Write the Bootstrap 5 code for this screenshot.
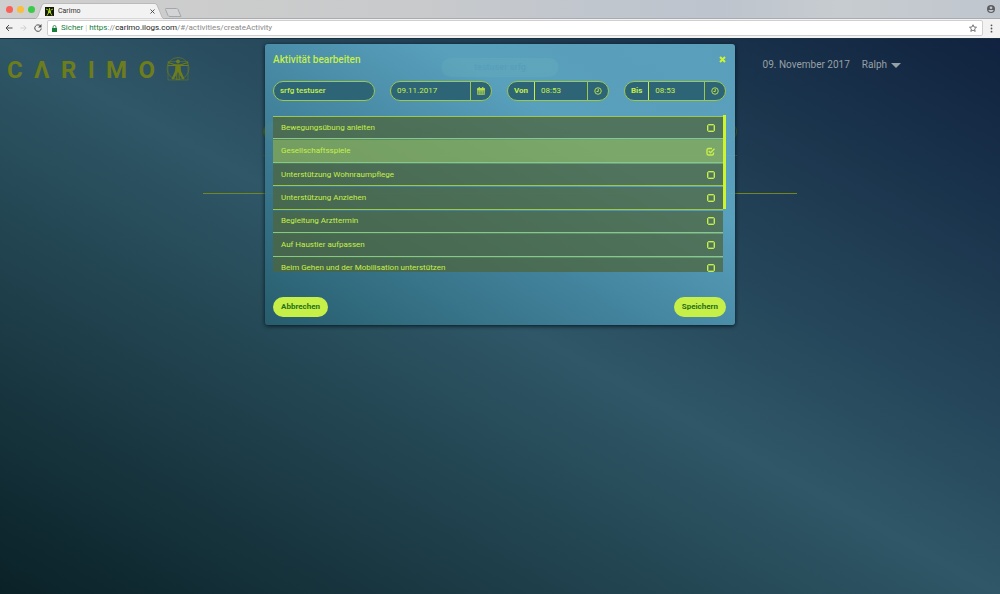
<!DOCTYPE html>
<html lang="de">
<head>
<meta charset="utf-8">
<meta name="viewport" content="width=device-width, initial-scale=1">
<title>Carimo</title>
<link href="https://cdn.jsdelivr.net/npm/bootstrap@5.3.0/dist/css/bootstrap.min.css" rel="stylesheet">
<style>
:root { --lime:#c6ef48; --line:#9cc84e; --field:#2d6577; --olive:#6d7d1c; }
body { font:8px/12px Roboto,"Liberation Sans",sans-serif; background:#0b2328; }
svg { display:block; flex:none; }
button, input { font:inherit; color:inherit; }

/* browser window */
.tabstrip { height:19px; background:linear-gradient(90deg,#cfcfcf,#c9cacb 40%,#c0c6ce 60%,#bdc4cd 72%,#c7ccd0 84%,#c0c6ce); border-bottom:1px solid #a9abae; padding:0 5px 0 6px; }
.lights { gap:4px; width:29px; margin-top:1px; }
.light { width:7px; height:7px; border-radius:50%; }
.tab { position:relative; width:130px; height:16px; padding:0 10px; font-size:7px; line-height:16px; color:#333; margin-bottom:-1px; }
.tab-shape { position:absolute; inset:0; width:100%; height:100%; }
.tab > :not(.tab-shape) { position:relative; }
.plain { border:0; background:none; padding:0; }
.toolbar { height:20px; background:#f2f2f2; border-bottom:1px solid #16303f; padding:1px 7px 2px 5px; color:#555; gap:7px; }
.address { height:16px; background:#fff; border:1px solid #cfcfcf; border-radius:2px; padding:0 5px 0 4px; margin-left:-2px; line-height:14px; color:#888; }
.divider { padding:0 2px; opacity:.5; }
.secure { color:#15803c; }
.host { color:#222; }

/* application */
.app { background:linear-gradient(to top right,#0a2127,#2f5767 50%,#10223f); }
.app-head { height:82px; padding:17px 99px 0 7px; color:#97a0a5; font-size:10px; line-height:18px; }
.wordmark { width:148px; height:28px; color:var(--olive); font-size:24px; line-height:28px; font-weight:700; }
.person { width:117px; height:19px; border-radius:10px; background:#7f9440; color:#0a2638; line-height:19px; font-size:9px; top:19px; }
.dim-nav { width:474px; height:72px; font-size:9px; }
.dim-nav a { height:21px; line-height:19px; width:112px; border:1px solid #4d641f; border-radius:11px; color:#0a2638; text-align:center; text-decoration:none; }
.dim-nav a:first-child { background:var(--olive); }
.dim-line { border-top:1px solid #4b6332; margin-top:13px; }
.rule { width:calc(60% - 6px); height:1px; background:#75861c; }

/* dialog */
.overlay { position:absolute; inset:0; padding-top:5px; }
.dialog { width:47%; min-width:470px; height:281px; padding:8px 9px 8px 8px; border-radius:3px; color:var(--lime); background:linear-gradient(to top right,rgba(39,94,110,.94),rgba(68,134,160,.94) 40%,rgba(92,166,195,.94) 68%,rgba(94,165,193,.94)); box-shadow:0 1px 4px #06161f; }
.dialog h1 { font-size:10px; line-height:15px; font-weight:500; }
.fields { display:grid; grid-template-columns:repeat(4,1fr); gap:15px; margin-top:14px; }
.field { height:20px; border:1px solid var(--line); border-radius:10px; background:var(--field); overflow:hidden; }
.field label { padding:0 6px; line-height:18px; font-weight:700; border-right:1px solid var(--lime); }
.field input { flex:1; min-width:0; width:0; border:0; padding:0 6px; background:none; outline:0; }
.field button { width:21px; border-left:1px solid var(--line); display:grid; place-items:center; }
.list-wrap { margin-top:14px; height:157px; }
.tasks { flex:1; overflow:hidden; margin-top:1px; }
.task-grid { display:grid; height:165px; grid-template-rows:repeat(7,1fr); border-top:1px solid var(--line); }
.task { display:flex; align-items:center; justify-content:space-between; padding:0 8px; margin-bottom:1px; background:rgba(78,102,61,.75); border-bottom:1px solid var(--line); }
.task:has(:checked) { background:rgba(135,170,80,.75); }
.task label { flex:1; }
.task input { appearance:none; width:8px; height:8px; margin:0; border:1px solid var(--lime); border-radius:2px; box-shadow:inset 0 0 0 1px rgba(198,239,72,.4); }
.task input:checked { border:0; box-shadow:none; width:9px; height:9px; background:url("data:image/svg+xml,%3Csvg xmlns='http://www.w3.org/2000/svg' viewBox='0 0 18 18' fill='none' stroke='%23c6ef48' stroke-width='2.8'%3E%3Cpath d='M12 3H5Q2 3 2 6v7q0 3 3 3h7q3 0 3-3v-2M5.500 8l3.500 3.500L17 3.500'/%3E%3C/svg%3E") center/contain no-repeat; }
.thumb { width:3px; height:94px; background:#cdf52f; }
.pill { height:20px; border:0; border-radius:10px; padding:0 8px; background:var(--lime); color:#27701c; font-weight:700; line-height:20px; }
</style>
</head>
<body class="d-flex flex-column min-vh-100">
<header>
  <div class="tabstrip d-flex align-items-end">
    <div class="lights d-flex align-self-center">
      <span class="light" style="background:#f9605a"></span><span class="light" style="background:#f8be3c"></span><span class="light" style="background:#3bcb48"></span>
    </div>
    <div class="tab d-flex align-items-center">
      <svg class="tab-shape" viewBox="0 0 130 16" preserveAspectRatio="none"><path d="M0 16Q2 15 3 13L7 2Q8 .5 10 .5H119Q121 .5 122 2L127 14Q128 16 130 16Z" fill="#f2f2f2" stroke="#aaa" stroke-width=".7"/></svg>
      <svg width="9" height="9" viewBox="0 0 9 9"><path fill="#151a08" d="M0 0h9v9H0z"/><path d="M1 2l2.500 1.200h2L8 2M3.500 4v2L2 8.500M5.500 4v2L7 8.500M4.500 1v5" stroke="#a8cf20" fill="none"/></svg>
      <span class="ms-1 flex-grow-1">Carimo</span>
      <button class="plain" aria-label="Tab schließen"><svg width="5" height="5" viewBox="0 0 5 5"><path d="M.5.5l4 4m0-4l-4 4" stroke="#444" stroke-width=".9"/></svg></button>
    </div>
    <svg class="align-self-center mt-2" width="20" height="10" viewBox="4 0 20 10"><path d="M3 .5h10.500q1 0 1.500 1l3 7H7q-1.500 0-2-1L2.500 1.500Q2.300.500 3 .5Z" fill="#d2d4d6" stroke="#a4a6a9" transform="translate(2)"/></svg>
    <svg class="ms-auto align-self-center" width="8" height="8" viewBox="0 0 16 16"><circle cx="8" cy="8" r="8" fill="#5c5e62"/><circle cx="8" cy="5.500" r="2.700" fill="#c4c9cf"/><path d="M2.500 10h11q-2 4-5.500 4t-5.500-4" fill="#c4c9cf"/></svg>
  </div>
  <div class="toolbar d-flex align-items-center">
    <button class="plain" aria-label="Zurück"><svg width="8" height="8" viewBox="0 0 16 16" fill="none" stroke="#4b4b4b" stroke-width="2"><path d="M15 8H2M8 2L2 8l6 6"/></svg></button>
    <button class="plain" aria-label="Vorwärts"><svg width="7" height="8" viewBox="0 0 16 16" fill="none" stroke="#ccc" stroke-width="2"><path d="M1 8h13M8 2l6 6-6 6"/></svg></button>
    <button class="plain" aria-label="Neu laden"><svg width="8" height="8" viewBox="0 0 16 16" fill="none" stroke="#4b4b4b" stroke-width="2"><path d="M13 4a6.500 6.500 0 1 0 1.500 5"/><path d="M15 0v7H8z" fill="#4b4b4b" stroke="none"/></svg></button>
    <div class="address d-flex align-items-center flex-grow-1">
      <svg class="me-1" width="5" height="7" viewBox="0 0 10 14"><path d="M0 6h10v8H0z" fill="#15803c"/><path d="M2 6V4q0-3 3-3t3 3v2" fill="none" stroke="#15803c" stroke-width="1.600"/></svg>
      <span class="secure">Sicher</span><span class="divider">|</span><span><span class="secure">https</span>://<span class="host">carimo.ilogs.com</span>/#/activities/createActivity</span>
      <svg class="ms-auto" width="8" height="8" viewBox="0 0 16 16"><path d="M8 1.500l2 4.500 5 .5-3.800 3.300 1.200 5L8 12.300l-4.400 2.500 1.200-5L1 6.500 6 6z" fill="none" stroke="#555" stroke-width="1.600"/></svg>
    </div>
    <button class="plain" aria-label="Menü"><svg width="3" height="9" viewBox="0 0 3 9" fill="#555"><circle cx="1.500" cy="1.300" r=".9"/><circle cx="1.500" cy="4.500" r=".9"/><circle cx="1.500" cy="7.700" r=".9"/></svg></button>
  </div>
</header>

<main class="app position-relative flex-grow-1">
  <div class="app-head d-flex align-items-start">
    <div class="wordmark d-flex justify-content-between" role="img" aria-label="Carimo"><span>C</span><span>Λ</span><span>R</span><span>I</span><span>M</span><span>O</span></div>
    <svg class="ms-2" width="29" height="26" viewBox="0 0 29 26" fill="none" stroke="#6d7d1c"><g transform="translate(3 1)"><circle cx="12" cy="11.500" r="11" stroke-width=".6"/><path d="M2 4.500h20v18.500H2z" stroke-width=".5"/><circle cx="12" cy="4.500" r="1.900" fill="#6d7d1c" stroke="none"/><path d="M2 5.500l8 2.500h4l8-2.500M2 8.500h20" stroke-width="1.200"/><path d="M9.500 7.500h5L15 14l3.500 8-2 .5L12 15l-4.500 7.500-2-.5L9 14z" fill="#6d7d1c" stroke="none"/><path d="M10.800 14v9M13.200 14v9" stroke-width="1"/></g></svg>
    <span class="ms-auto">09. November 2017</span>
    <a href="#" class="d-flex align-items-center text-reset text-decoration-none ps-2 ms-1">Ralph<svg class="ms-1" width="10" height="5" viewBox="0 0 10 5"><path d="M0 0h10L5 5z" fill="#97a0a5"/></svg></a>
  </div>
  <div class="person position-absolute start-50 translate-middle-x text-center fw-bold">testuser srfg</div>
  <div class="dim-nav mx-auto">
    <nav class="d-flex justify-content-between fw-bold"><a href="#" aria-label="Start"></a><a href="#">Handbuch und Kurse</a><a href="#">Termine</a><a href="#">Administration</a></nav>
    <div class="dim-line"></div>
  </div>
  <div class="rule mx-auto"></div>

  <div class="overlay d-flex justify-content-center align-items-start">
    <form class="dialog d-flex flex-column" role="dialog" aria-labelledby="dialog-title">
      <div class="d-flex justify-content-between">
        <h1 class="m-0" id="dialog-title">Aktivität bearbeiten</h1>
        <button type="button" class="plain align-self-start mt-1" aria-label="Schließen"><svg width="7" height="7" viewBox="0 0 7 7"><path d="M1 1l5 5m0-5L1 6" stroke="#cdf52f" stroke-width="2"/></svg></button>
      </div>
      <div class="fields">
        <div class="field d-flex"><input class="fw-medium" type="text" value="srfg testuser" aria-label="Person"></div>
        <div class="field d-flex"><input type="text" value="09.11.2017" aria-label="Datum"><button type="button" class="plain" aria-label="Kalender"><svg width="8" height="8" viewBox="0 0 16 16" fill="none" stroke="#b5dc4c" stroke-width="1.300"><path d="M1 3h14v12H1zM1 6.500h14M1 9.500h14M1 12.200h14M4.500 6v9M8 6v9M11.500 6v9"/><path d="M1 3h14v3H1z" fill="#b5dc4c"/><path d="M4.500 0v4M11.500 0v4" stroke-width="2.500"/></svg></button></div>
        <div class="field d-flex"><label for="von">Von</label><input id="von" type="text" value="08:53"><button type="button" class="plain" aria-label="Startzeit wählen"><svg width="8" height="8" viewBox="0 0 16 16" fill="none" stroke="#b5dc4c" stroke-width="2"><circle cx="8" cy="8" r="6.500"/><path d="M8.500 4v5H5"/></svg></button></div>
        <div class="field d-flex"><label for="bis">Bis</label><input id="bis" type="text" value="08:53"><button type="button" class="plain" aria-label="Endzeit wählen"><svg width="8" height="8" viewBox="0 0 16 16" fill="none" stroke="#b5dc4c" stroke-width="2"><circle cx="8" cy="8" r="6.500"/><path d="M8.500 4v5H5"/></svg></button></div>
      </div>
      <div class="list-wrap d-flex">
        <div class="tasks"><div class="task-grid">
          <div class="task"><label for="t1">Bewegungsübung anleiten</label><input id="t1" type="checkbox"></div>
          <div class="task"><label for="t2">Gesellschaftsspiele</label><input id="t2" type="checkbox" checked></div>
          <div class="task"><label for="t3">Unterstützung Wohnraumpflege</label><input id="t3" type="checkbox"></div>
          <div class="task"><label for="t4">Unterstützung Anziehen</label><input id="t4" type="checkbox"></div>
          <div class="task"><label for="t5">Begleitung Arzttermin</label><input id="t5" type="checkbox"></div>
          <div class="task"><label for="t6">Auf Haustier aufpassen</label><input id="t6" type="checkbox"></div>
          <div class="task"><label for="t7">Beim Gehen und der Mobilisation unterstützen</label><input id="t7" type="checkbox"></div>
        </div></div>
        <div class="thumb"></div>
      </div>
      <div class="d-flex justify-content-between mt-auto">
        <button type="button" class="pill">Abbrechen</button>
        <button type="submit" class="pill">Speichern</button>
      </div>
    </form>
  </div>
</main>
<script src="https://cdn.jsdelivr.net/npm/bootstrap@5.3.0/dist/js/bootstrap.bundle.min.js"></script>
</body>
</html>
